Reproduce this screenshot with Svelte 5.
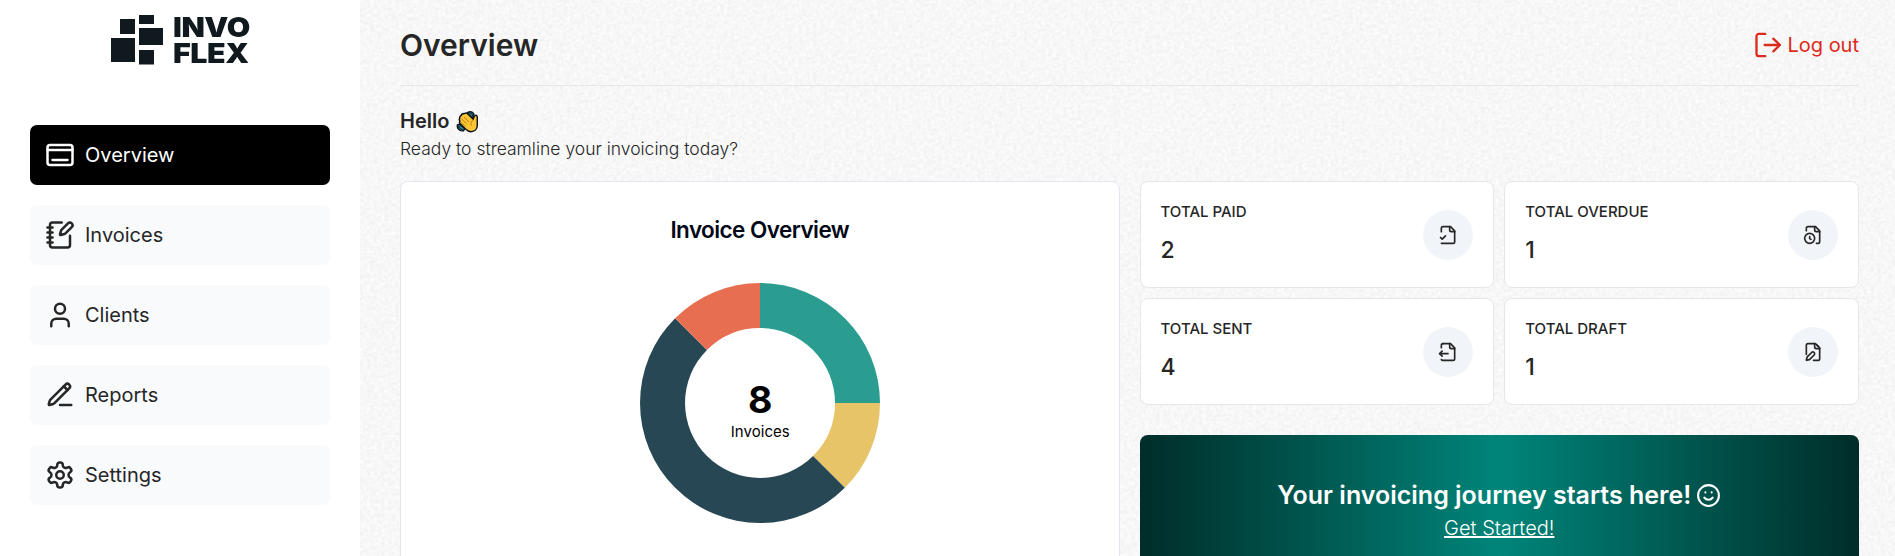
<script>
  const nav = [
    { icon: 'overview', label: 'Overview', active: true },
    { icon: 'invoices', label: 'Invoices' },
    { icon: 'clients', label: 'Clients' },
    { icon: 'reports', label: 'Reports' },
    { icon: 'settings', label: 'Settings' }
  ];

  const stats = [
    { label: 'TOTAL PAID', value: 2, icon: 'paid' },
    { label: 'TOTAL OVERDUE', value: 1, icon: 'overdue' },
    { label: 'TOTAL SENT', value: 4, icon: 'sent' },
    { label: 'TOTAL DRAFT', value: 1, icon: 'draft' }
  ];

  const slices = [
    { value: 2, color: '#2a9d90' },
    { value: 1, color: '#e8c468' },
    { value: 4, color: '#274754' },
    { value: 1, color: '#e76e50' }
  ];

  const total = slices.reduce((sum, s) => sum + s.value, 0);

  function point(radius, angle) {
    return `${(120 + radius * Math.sin(angle)).toFixed(3)} ${(120 - radius * Math.cos(angle)).toFixed(3)}`;
  }

  function arc(start, end) {
    const a = (start / total) * 2 * Math.PI;
    const b = (end / total) * 2 * Math.PI;
    return `M${point(120, a)}A120 120 0 0 1 ${point(120, b)}L${point(75, b)}A75 75 0 0 0 ${point(75, a)}Z`;
  }

  let offset = 0;
  const arcs = slices.map((s) => {
    const d = arc(offset, offset + s.value);
    offset += s.value;
    return { d, color: s.color };
  });

  const icons = {
    overview: ['M2 8h20', 'M4 4h16a2 2 0 0 1 2 2v12a2 2 0 0 1-2 2H4a2 2 0 0 1-2-2V6a2 2 0 0 1 2-2z', 'M6 16h12'],
    invoices: [
      'M13.4 2H6a2 2 0 0 0-2 2v16a2 2 0 0 0 2 2h12a2 2 0 0 0 2-2v-7.4',
      'M2 6h4', 'M2 10h4', 'M2 14h4', 'M2 18h4',
      'M21.378 5.626a1 1 0 1 0-3.004-3.004l-5.01 5.012a2 2 0 0 0-.506.854l-.837 2.87a.5.5 0 0 0 .62.62l2.87-.837a2 2 0 0 0 .854-.506z'
    ],
    clients: ['M19 21v-2a4 4 0 0 0-4-4H9a4 4 0 0 0-4 4v2', 'M16 7a4 4 0 1 1-8 0a4 4 0 0 1 8 0z'],
    reports: [
      'M12 20h9',
      'M16.376 3.622a1 1 0 0 1 3.002 3.002L7.368 18.635a2 2 0 0 1-.855.506l-2.872.838a.5.5 0 0 1-.62-.62l.838-2.872a2 2 0 0 1 .506-.854z',
      'm15 5 3 3'
    ],
    settings: [
      'M12.22 2h-.44a2 2 0 0 0-2 2v.18a2 2 0 0 1-1 1.73l-.43.25a2 2 0 0 1-2 0l-.15-.08a2 2 0 0 0-2.73.73l-.22.38a2 2 0 0 0 .73 2.73l.15.1a2 2 0 0 1 1 1.72v.51a2 2 0 0 1-1 1.74l-.15.09a2 2 0 0 0-.73 2.73l.22.38a2 2 0 0 0 2.73.73l.15-.08a2 2 0 0 1 2 0l.43.25a2 2 0 0 1 1 1.73V20a2 2 0 0 0 2 2h.44a2 2 0 0 0 2-2v-.18a2 2 0 0 1 1-1.73l.43-.25a2 2 0 0 1 2 0l.15.08a2 2 0 0 0 2.73-.73l.22-.39a2 2 0 0 0-.73-2.73l-.15-.08a2 2 0 0 1-1-1.74v-.5a2 2 0 0 1 1-1.74l.15-.09a2 2 0 0 0 .73-2.73l-.22-.38a2 2 0 0 0-2.73-.73l-.15.08a2 2 0 0 1-2 0l-.43-.25a2 2 0 0 1-1-1.73V4a2 2 0 0 0-2-2z',
      'M15 12a3 3 0 1 1-6 0a3 3 0 0 1 6 0z'
    ],
    paid: ['M4 22h14a2 2 0 0 0 2-2V7l-5-5H6a2 2 0 0 0-2 2v4', 'M14 2v4a2 2 0 0 0 2 2h4', 'm3 15 2 2 4-4'],
    overdue: [
      'M16 22h2a2 2 0 0 0 2-2V7l-5-5H6a2 2 0 0 0-2 2v3',
      'M14 2v4a2 2 0 0 0 2 2h4',
      'M14 16a6 6 0 1 1-12 0a6 6 0 0 1 12 0z',
      'M8 14v2.2l1.6 1'
    ],
    sent: ['M14 2v4a2 2 0 0 0 2 2h4', 'M4 7V4a2 2 0 0 1 2-2 2 2 0 0 0-2 2', 'M4.063 20.999a2 2 0 0 0 2 1L18 22a2 2 0 0 0 2-2V7l-5-5H6', 'm5 11-3 3', 'm5 17-3-3h10'],
    draft: [
      'm18 5-2.414-2.414A2 2 0 0 0 14.172 2H6a2 2 0 0 0-2 2v11',
      'M14 2v4a2 2 0 0 0 2 2h4',
      'M12.5 22H18a2 2 0 0 0 2-2V7l-3-3',
      'M13.378 15.626a1 1 0 1 0-3.004-3.004l-5.01 5.012a2 2 0 0 0-.506.854l-.837 2.87a.5.5 0 0 0 .62.62l2.87-.837a2 2 0 0 0 .854-.506z'
    ],
    logout: ['M10.500 2.500H5a2 2 0 0 0-2 2v15a2 2 0 0 0 2 2h5.500', 'M10 12h13', 'm17.400 6.600 5.600 5.400-5.600 5.400'],
    smile: ['M22 12a10 10 0 1 1-20 0a10 10 0 0 1 20 0z', 'M8 14s1.5 2 4 2 4-2 4-2', 'M9 9h.01', 'M15 9h.01']
  };
</script>

{#snippet icon(name, size, width = 2)}
  <svg class="icon" width={size} height={size} viewBox="0 0 24 24" stroke-width={width}>
    {#each icons[name] as d}<path {d} />{/each}
  </svg>
{/snippet}

<div class="shell">
  <aside>
    <div class="logo">
      <svg width="54" height="52" viewBox="0 0 54 52">
        <rect x="9" y="4" width="15" height="15" />
        <rect x="28" y="0" width="15" height="9" />
        <rect x="28" y="13" width="24" height="17" />
        <rect x="0" y="23" width="24" height="24" />
        <rect x="28" y="35" width="15" height="14.5" />
      </svg>
      <div class="wordmark">INVO<br />FLEX</div>
    </div>
    <nav>
      {#each nav as item}
        <a href="#{item.icon}" class:active={item.active}>
          {@render icon(item.icon, 30)}<span>{item.label}</span>
        </a>
      {/each}
    </nav>
  </aside>

  <main>
    <svg class="grain" width="100%" height="100%" aria-hidden="true">
      <filter id="grain" x="0" y="0" width="100%" height="100%" color-interpolation-filters="sRGB">
        <feTurbulence type="fractalNoise" baseFrequency="0.28" numOctaves="3" seed="4" />
        <feColorMatrix values="0.075 0 0 0 0.931  0.075 0 0 0 0.931  0.075 0 0 0 0.931  0 0 0 0 1" />
      </filter>
      <rect width="100%" height="100%" filter="url(#grain)" />
    </svg>

    <header>
      <h1>Overview</h1>
      <button>{@render icon('logout', 28)}<span>Log out</span></button>
    </header>

    <section class="hello">
      <h2>
        Hello
        <svg width="23" height="23" viewBox="0 0 24 24">
          <g stroke="#0b1216" stroke-width="1.5" fill="#2b7f95" stroke-linejoin="round">
            <path d="M11.5 3.6C13 .9 17 1 18.6 4.2L19 7l-3 1z" />
            <path d="M1.6 15.4C.6 19 3.4 22.6 8 21.6L9 19l-5-4z" />
            <path d="M13.2 2.8c2.2-.2 3.6 1.2 4.2 3.4M2.8 16.6c.2 2.2 1.8 3.6 4 3.8" fill="none" stroke-width="1" />
          </g>
          <path d="M9.2 3.7C10.4 2.8 11.8 3.5 12.6 4.3L18 9.600c.5-1.9.7-3.6 2.400-4 1.400-.2 1.800.8 1.800 2.100v8.600c0 4-3 6.300-6.600 6.300-2.900 0-4.500-1.500-6-3l-5.400-5.400c-.9-1-.8-2.100 0-2.600-.9-1-1.100-2.100-.2-3-.5-1.300.1-2.400 1.400-2.700.2-1.700 1.500-2.400 3.800-2.200z" fill="#fdc534" stroke="#0b1216" stroke-width="1.500" stroke-linejoin="round" />
          <path d="m6 9.500 5 5M8.500 7.500l4.800 4.800M5.500 13l4 4M18 10.500c-2.500 1.500-3 3.500-2 5.500" fill="none" stroke="#a97710" stroke-width="0.900" stroke-linecap="round" />
        </svg>
      </h2>
      <p>Ready to streamline your invoicing today?</p>
    </section>

    <div class="content">
      <section class="card chart">
        <h3>Invoice Overview</h3>
        <div class="donut">
          <svg width="240" height="240" viewBox="0 0 240 240">
            {#each arcs as a}<path d={a.d} fill={a.color} />{/each}
          </svg>
          <div class="total"><strong>{total}</strong><span>Invoices</span></div>
        </div>
      </section>

      <div class="right">
        <div class="stats">
          {#each stats as s}
            <section class="card stat">
              <div><h4>{s.label}</h4><b>{s.value}</b></div>
              <span class="badge">{@render icon(s.icon, 20)}</span>
            </section>
          {/each}
        </div>
        <section class="banner">
          <h2>Your invoicing journey starts here! {@render icon('smile', 25)}</h2>
          <a href="#start">Get Started!</a>
        </section>
      </div>
    </div>
  </main>
</div>

<style>
  :global(body) {
    margin: 0;
    overflow: hidden;
    background: #fff;
  }
  .shell {
    display: grid;
    grid-template-columns: 360px 1fr;
    height: 556px;
    overflow: hidden;
    font-family: Inter, sans-serif;
    color: #262626;
  }
  .shell :is(h1, h2, h3, h4, p) {
    margin: 0;
  }
  .icon {
    display: block;
    flex: none;
    fill: none;
    stroke: currentColor;
    stroke-linecap: round;
    stroke-linejoin: round;
  }
  aside {
    background: #fff;
    padding: 0 30px;
  }
  .logo {
    display: flex;
    align-items: flex-start;
    gap: 8px;
    height: 110px;
    padding: 15px 0 0 81px;
    box-sizing: border-box;
    fill: #10191e;
  }
  .wordmark {
    color: #10191e;
    font: 900 27px/26px Inter, sans-serif;
    letter-spacing: -0.4px;
    white-space: nowrap;
    transform: scaleX(1.125);
    transform-origin: 0 0;
  }
  nav {
    display: grid;
    gap: 20px;
    padding-top: 15px;
  }
  nav a {
    display: flex;
    align-items: center;
    gap: 10px;
    height: 60px;
    padding: 0 15px;
    box-sizing: border-box;
    border-radius: 7px;
    background: #f8fafc;
    color: #262626;
    font-size: 20px;
    text-decoration: none;
  }
  nav a.active {
    background: #000;
    color: #fff;
  }
  main {
    position: relative;
    z-index: 0;
    padding: 0 36px 0 40px;
    background: #f6f6f6;
    overflow: hidden;
  }
  .grain {
    position: absolute;
    inset: 0;
    z-index: -1;
  }
  header {
    display: flex;
    align-items: center;
    justify-content: space-between;
    height: 86px;
    padding-top: 5px;
    box-sizing: border-box;
    border-bottom: 1px solid #e5e7eb;
    margin-bottom: 20px;
  }
  h1 {
    font-size: 30px;
    font-weight: 600;
  }
  button {
    display: flex;
    align-items: center;
    gap: 6px;
    padding: 0;
    border: 0;
    background: none;
    color: #dc2a1c;
    font: 400 20px/30px Inter, sans-serif;
  }
  .hello h2 {
    display: flex;
    align-items: center;
    gap: 7px;
    font-size: 20px;
    line-height: 30px;
    font-weight: 600;
  }
  .hello p {
    font-size: 17.5px;
    line-height: 26px;
    font-weight: 300;
  }
  .content {
    display: grid;
    grid-template-columns: 1fr 1fr;
    gap: 20px;
    margin-top: 19px;
  }
  .card {
    background: #fff;
    border: 1px solid #e2e8f0;
    border-radius: 8px;
    box-sizing: border-box;
  }
  .chart {
    height: 460px;
    display: flex;
    flex-direction: column;
    align-items: center;
    padding-top: 30px;
    color: #020817;
  }
  h3 {
    font-size: 22.5px;
    line-height: 36px;
    font-weight: 600;
    letter-spacing: -0.56px;
  }
  .donut {
    display: grid;
    margin-top: 35px;
  }
  .donut > * {
    grid-area: 1 / 1;
  }
  .total {
    display: flex;
    flex-direction: column;
    align-items: center;
    padding: 93px 0 0 1px;
    color: #000;
  }
  .total strong {
    font-size: 37.5px;
    line-height: 48px;
  }
  .total span {
    font-size: 15px;
    line-height: 16px;
    letter-spacing: 0.05px;
  }
  .stats {
    display: grid;
    grid-template-columns: 1fr 1fr;
    gap: 10px;
  }
  .stat {
    height: 107px;
    display: flex;
    align-items: center;
    justify-content: space-between;
    padding: 0 20px;
    border-color: #e5e7eb;
  }
  h4 {
    font-size: 15px;
    line-height: 22px;
    font-weight: 450;
  }
  .stat b {
    display: block;
    margin: 10px 0 1px;
    font-size: 23px;
    line-height: 34px;
    font-weight: 500;
  }
  .badge {
    display: grid;
    place-items: center;
    width: 50px;
    height: 50px;
    border-radius: 50%;
    background: #f1f5f9;
  }
  .banner {
    display: flex;
    flex-direction: column;
    align-items: center;
    height: 200px;
    margin-top: 30px;
    padding-top: 42px;
    box-sizing: border-box;
    border-radius: 8px;
    background: linear-gradient(90deg, #002d29, #00857a 50%, #002d29);
    color: #fff;
  }
  .banner h2 {
    display: flex;
    align-items: center;
    gap: 5px;
    font-size: 25px;
    line-height: 36px;
    font-weight: 600;
  }
  .banner a {
    color: #fff;
    font-size: 20px;
    line-height: 30px;
    font-weight: 300;
  }
</style>
